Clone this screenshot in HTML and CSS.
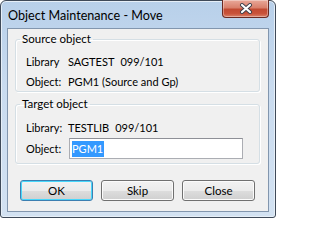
FILE: index.html
```html
<!DOCTYPE html>
<html>
<head>
<meta charset="utf-8">
<link rel="stylesheet" href="styles.css">
</head>
<body>
<div class="window">
  <div class="titlebar">
    <span class="title">Object Maintenance - Move</span>
    <div class="close-btn">
      <svg width="14" height="11" viewBox="0 0 14 11">
        <path d="M3 2 L11 9 M11 2 L3 9" stroke="#3b3f4a" stroke-width="4" stroke-linecap="round"/>
        <path d="M3 2 L11 9 M11 2 L3 9" stroke="#ffffff" stroke-width="2.2" stroke-linecap="round"/>
      </svg>
    </div>
  </div>
  <div class="client">
    <fieldset class="group group-source">
      <legend>Source object</legend>
      <div class="row">
        <span class="label">Library</span>
        <span class="value">SAGTEST</span><span class="value2">099/101</span>
      </div>
      <div class="row">
        <span class="label">Object:</span>
        <span class="value">PGM1 (Source and Gp)</span>
      </div>
    </fieldset>
    <fieldset class="group group-target">
      <legend>Target object</legend>
      <div class="row row-t">
        <span class="label">Library:</span>
        <span class="value">TESTLIB</span><span class="value2">099/101</span>
      </div>
      <div class="row row-t">
        <span class="label">Object:</span>
        <div class="input"><span class="sel">PGM1</span></div>
      </div>
    </fieldset>
    <div class="buttons">
      <div class="btn btn-default">OK</div>
      <div class="btn">Skip</div>
      <div class="btn">Close</div>
    </div>
  </div>
</div>
</body>
</html>
```

FILE: styles.css
```css
html, body {
  margin: 0;
  padding: 0;
  background: #ffffff;
}
body {
  font-family: Lato, "Noto Sans", sans-serif;
  font-size: 11px;
  color: #000;
}
.window {
  box-sizing: border-box;
  width: 276px;
  height: 218px;
  border: 1px solid #3f4a59;
  border-radius: 6px 6px 3px 3px;
  background: linear-gradient(180deg, #b8d0ea 0%, #c9dbef 40%, #d3e2f2 100%);
  display: flex;
  flex-direction: column;
  box-shadow: inset 0 0 0 1px #e6eff8;
}
.titlebar {
  height: 27px;
  display: flex;
  justify-content: space-between;
  align-items: flex-start;
  padding-left: 7px;
  padding-right: 6px;
}
.title {
  font-size: 12.6px;
  line-height: 15px;
  margin-top: 7px;
  color: #000;
}
.close-btn {
  box-sizing: border-box;
  width: 47px;
  height: 18px;
  margin-top: -1px;
  border: 1px solid #6b2a22;
  border-top: none;
  border-radius: 0 0 4px 4px;
  background: linear-gradient(180deg, #e9a99a 0%, #d9806c 45%, #c24a32 55%, #c9533a 80%, #d9826a 100%);
  box-shadow: inset 0 0 0 1px rgba(255,255,255,0.35);
  display: flex;
  align-items: center;
  justify-content: center;
}
.close-btn svg { display: block; }
.client {
  box-sizing: border-box;
  margin: 0 6px 0 6px;
  height: 184px;
  border: 1px solid #8296ae;
  background: #f0f0f0;
  padding: 3px 8px 0 7px;
}
.group {
  margin: 0;
  padding: 0 4px;
  border: 1px solid #d5dfe5;
  border-radius: 3px;
  box-shadow: inset 1px 1px 0 #ffffff, 1px 1px 0 #ffffff;
}
.group legend {
  padding: 0 2px;
  line-height: 14px;
  font-size: 11.5px;
}
.group-source { padding-top: 5px; height: 60px; box-sizing: border-box; }
.group-target { margin-top: 5px; padding-top: 6px; height: 67px; box-sizing: border-box; }
.row {
  display: flex;
  align-items: center;
  height: 20px;
  padding-left: 6px;
}
.row-t { height: 21px; }
.label {
  width: 42px;
  flex: none;
}
.value2 { margin-left: 6px; }
.input {
  box-sizing: border-box;
  width: 174px;
  height: 21px;
  margin-left: 1px;
  border: 1px solid #abadb3;
  border-top-color: #8e9097;
  background: #ffffff;
  display: flex;
  align-items: center;
  padding-left: 2px;
}
.sel {
  background: #3399ff;
  color: #ffffff;
  line-height: 16px;
  padding: 0 1px 0 0;
}
.buttons {
  display: flex;
  gap: 8px;
  margin-top: 16px;
  padding-left: 5px;
}
.btn {
  box-sizing: border-box;
  width: 73px;
  height: 21px;
  border: 1px solid #707070;
  border-radius: 3px;
  background: linear-gradient(180deg, #f2f2f2 0%, #ebebeb 50%, #dddddd 51%, #cfcfcf 100%);
  box-shadow: inset 0 0 0 1px #fbfbfb;
  display: flex;
  align-items: center;
  justify-content: center;
  font-size: 11.5px;
}
.btn-default {
  border-color: #3c7fb1;
  box-shadow: inset 0 0 0 1px #48d7fb;
}
```
